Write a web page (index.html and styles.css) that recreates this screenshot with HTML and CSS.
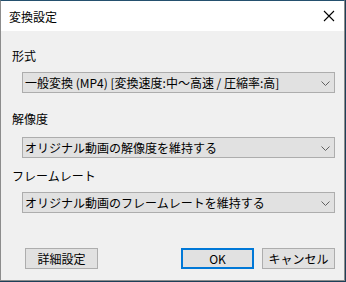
FILE: index.html
```html
<!DOCTYPE html>
<html lang="ja">
<head>
<meta charset="utf-8">
<link rel="stylesheet" href="styles.css">
</head>
<body>
<div class="window">
  <div class="titlebar">
    <span class="title">変換設定</span>
    <svg class="close" width="12" height="12" viewBox="0 0 12 12"><path d="M1 1 L11 11 M11 1 L1 11" stroke="#000" stroke-width="1.1" fill="none"/></svg>
  </div>
  <div class="content">
    <div class="label l1">形式</div>
    <div class="combo c1">
      <span class="combo-text">一般変換 (MP4) [変換速度:中～高速 / 圧縮率:高]</span>
      <svg class="chev" width="9" height="5" viewBox="0 0 9 5"><path d="M0.5 0.5 L4.5 4.5 L8.5 0.5" stroke="#606060" stroke-width="1" fill="none"/></svg>
    </div>
    <div class="label l2">解像度</div>
    <div class="combo c2">
      <span class="combo-text">オリジナル動画の解像度を維持する</span>
      <svg class="chev" width="9" height="5" viewBox="0 0 9 5"><path d="M0.5 0.5 L4.5 4.5 L8.5 0.5" stroke="#606060" stroke-width="1" fill="none"/></svg>
    </div>
    <div class="label l3">フレームレート</div>
    <div class="combo c3">
      <span class="combo-text">オリジナル動画のフレームレートを維持する</span>
      <svg class="chev" width="9" height="5" viewBox="0 0 9 5"><path d="M0.5 0.5 L4.5 4.5 L8.5 0.5" stroke="#606060" stroke-width="1" fill="none"/></svg>
    </div>
    <div class="buttons">
      <div class="btn">詳細設定</div>
      <div class="spacer"></div>
      <div class="btn default">OK</div>
      <div class="btn">キャンセル</div>
    </div>
  </div>
</div>
</body>
</html>
```
FILE: styles.css
```css
html, body {
  margin: 0;
  padding: 0;
}
body {
  width: 346px;
  height: 282px;
  background: #1d3f58;
  font-family: "Noto Sans CJK JP", "Noto Sans", sans-serif;
  font-size: 12px;
  color: #000;
  overflow: hidden;
}
.window {
  box-sizing: border-box;
  width: 345px;
  height: 281px;
  border: 1px solid #8c8c8c;
  border-top-color: #24506e;
  background: #f0f0f0;
  display: flex;
  flex-direction: column;
}
.titlebar {
  height: 30px;
  background: #fff;
  display: flex;
  align-items: center;
  padding-left: 8px;
  padding-right: 9px;
}
.title {
  flex: 1;
  line-height: 16px;
  margin-top: 1px;
}
.close {
  display: block;
}
.content {
  flex: 1;
  padding: 0 9px 0 11px;
  display: flex;
  flex-direction: column;
}
.label {
  line-height: 16px;
  height: 16px;
}
.l1 { margin-top: 17px; }
.l2 { margin-top: 18px; }
.l3 { margin-top: 10px; }
.combo {
  box-sizing: border-box;
  margin-left: 10px;
  height: 21px;
  border: 1px solid #adadad;
  background: #e1e1e1;
  display: flex;
  align-items: center;
  padding-left: 2px;
  padding-right: 4px;
}
.c1 { margin-top: 8px; }
.c2 { margin-top: 10px; }
.c3 { margin-top: 8px; }
.combo-text {
  flex: 1;
  line-height: 16px;
  white-space: nowrap;
}
.chev {
  display: block;
  margin-top: 1px;
}
.buttons {
  display: flex;
  margin-top: 35px;
  padding-left: 13px;
  gap: 8px;
}
.spacer { flex: 1; }
.btn {
  box-sizing: border-box;
  width: 73px;
  height: 21px;
  border: 1px solid #adadad;
  background: #e1e1e1;
  display: flex;
  align-items: center;
  justify-content: center;
  line-height: 16px;
}
.btn.default {
  border: 2px solid #0078d7;
}
```
